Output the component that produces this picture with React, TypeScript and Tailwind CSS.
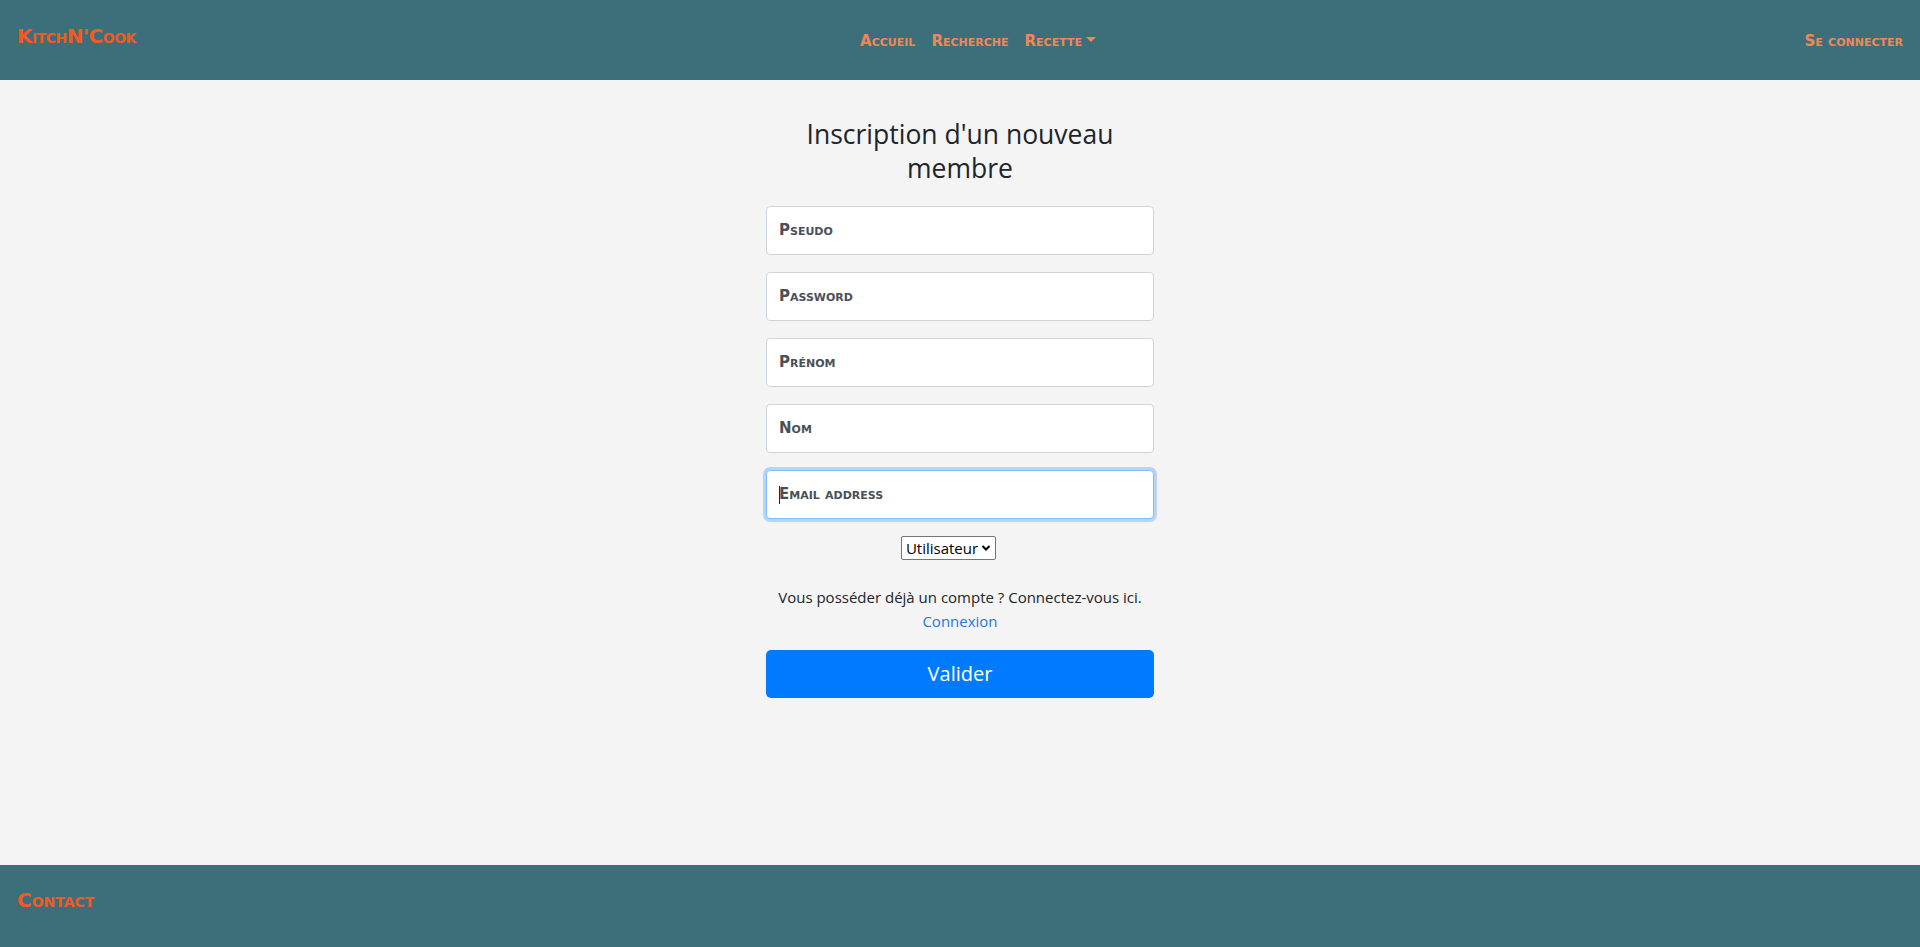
import React from "react";

const sc = { fontVariant: "small-caps" } as React.CSSProperties;

export default function App() {
  const fields = ["Pseudo", "Password", "Prénom", "Nom"];
  return (
    <div className="min-h-[947px] flex flex-col bg-[#f4f4f4] font-['Open_Sans','Noto_Sans',sans-serif] text-[#212529]">
      <header className="h-[80px] bg-[#3d6f7b] grid grid-cols-[1fr_auto_1fr] items-center px-[17px]">
        <div className="pb-[8px]">
          <span style={sc} className="font-['DejaVu_Sans',sans-serif] font-bold text-[20px] text-[#f15a22] tracking-[-0.5px]">KitchN'Cook</span>
        </div>
        <nav style={sc} className="flex items-center gap-[16px] ml-[36px] pt-[2px] font-['DejaVu_Sans',sans-serif] font-bold text-[15px] text-[#f0875a]">
          <span>Accueil</span>
          <span>Recherche</span>
          <span className="flex items-center gap-[4px]">
            Recette
            <span className="inline-block w-0 h-0 border-l-[5px] border-r-[5px] border-t-[5px] border-l-transparent border-r-transparent border-t-[#f0875a] mb-[4px]" />
          </span>
        </nav>
        <div className="flex justify-end pt-[2px]">
          <span style={sc} className="font-['DejaVu_Sans',sans-serif] font-bold text-[15px] text-[#f0875a]">Se connecter</span>
        </div>
      </header>

      <main className="flex-1 flex justify-center">
        <div className="w-[388px] flex flex-col items-center pt-[37px]">
          <h3 className="text-[26.5px] leading-[34px] text-center w-[330px] mb-[21px]">Inscription d'un nouveau membre</h3>
          <div className="w-full flex flex-col gap-[17px]">
            {fields.map((f) => (
              <div key={f} className="h-[49px] w-full bg-white border border-[#ced4da] rounded-[4px] flex items-center px-[12px]">
                <span style={sc} className="font-['DejaVu_Sans',sans-serif] font-bold text-[15px] text-[#495057]">{f}</span>
              </div>
            ))}
            <div className="h-[49px] w-full bg-white border border-[#80bdff] rounded-[4px] shadow-[0_0_0_3px_rgba(0,123,255,0.25)] flex items-center px-[12px]">
              <span className="w-[1px] h-[18px] bg-[#212529] mr-[-1px]" />
              <span style={sc} className="font-['DejaVu_Sans',sans-serif] font-bold text-[15px] text-[#495057]">Email address</span>
            </div>
          </div>
          <div className="mt-[17px] mr-[23px] h-[24px] px-[4px] border border-[#767676] rounded-[2px] bg-white flex items-center gap-[3px] text-[15px] text-black">
            <span>Utilisateur</span>
            <svg width="10" height="8" viewBox="0 0 10 8"><path d="M1.5 2l3.5 3.5L8.5 2" stroke="#000" strokeWidth="2" fill="none" /></svg>
          </div>
          <p className="mt-[25px] text-[15px] leading-[24px] text-center">
            Vous posséder déjà un compte ? Connectez-vous ici.
            <br />
            <span className="text-[#2b78d6]">Connexion</span>
          </p>
          <button className="mt-[17px] w-full h-[48px] bg-[#007bff] rounded-[5px] text-white text-[20px]">Valider</button>
        </div>
      </main>

      <footer className="h-[82px] bg-[#3d6f7b] flex items-center px-[17px]">
        <span style={sc} className="font-['DejaVu_Sans',sans-serif] font-bold text-[20px] text-[#f15a22] mb-[12px]">Contact</span>
      </footer>
    </div>
  );
}
